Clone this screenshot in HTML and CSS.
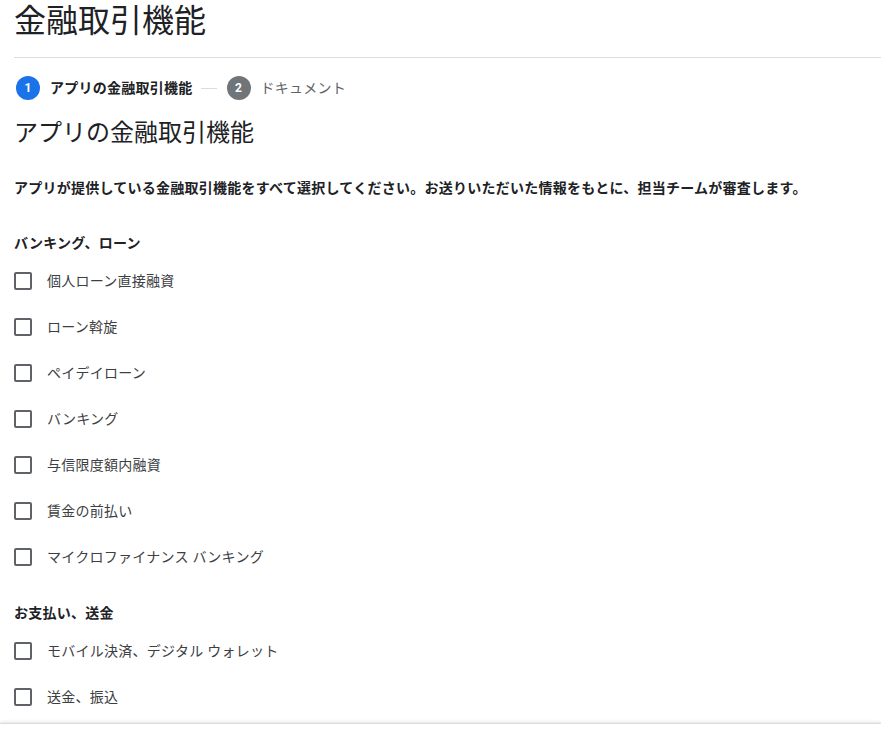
FILE: index.html
```html
<!DOCTYPE html>
<html lang="ja">
<head>
<meta charset="utf-8">
<title>金融取引機能</title>
<link rel="stylesheet" href="styles.css">
</head>
<body>
<div class="page">
  <h1 class="title">金融取引機能</h1>
  <div class="divider"></div>
  <div class="stepper">
    <span class="step-num active">1</span>
    <span class="step-label active">アプリの金融取引機能</span>
    <span class="step-line"></span>
    <span class="step-num">2</span>
    <span class="step-label">ドキュメント</span>
  </div>
  <h2 class="heading">アプリの金融取引機能</h2>
  <p class="intro">アプリが提供している金融取引機能をすべて選択してください。お送りいただいた情報をもとに、担当チームが審査します。</p>

  <div class="group">
    <div class="group-title">バンキング、ローン</div>
    <label class="row"><span class="box"></span><span class="label">個人ローン直接融資</span></label>
    <label class="row"><span class="box"></span><span class="label">ローン斡旋</span></label>
    <label class="row"><span class="box"></span><span class="label">ペイデイローン</span></label>
    <label class="row"><span class="box"></span><span class="label">バンキング</span></label>
    <label class="row"><span class="box"></span><span class="label">与信限度額内融資</span></label>
    <label class="row"><span class="box"></span><span class="label">賃金の前払い</span></label>
    <label class="row"><span class="box"></span><span class="label">マイクロファイナンス バンキング</span></label>
  </div>

  <div class="group second">
    <div class="group-title">お支払い、送金</div>
    <label class="row"><span class="box"></span><span class="label">モバイル決済、デジタル ウォレット</span></label>
    <label class="row"><span class="box"></span><span class="label">送金、振込</span></label>
  </div>
</div>
<div class="footer"></div>
</body>
</html>
```
FILE: styles.css
```css
html, body {
  margin: 0;
  padding: 0;
  background: #ffffff;
}
body {
  font-family: Roboto, "Noto Sans CJK JP", sans-serif;
  color: #202124;
  overflow: hidden;
  height: 740px;
}
.page {
  padding: 1px 0 0 14px;
  display: flex;
  flex-direction: column;
}
.title {
  margin: 0;
  font-size: 32px;
  line-height: 40px;
  font-weight: 400;
  color: #202124;
}
.divider {
  margin-top: 16px;
  height: 1px;
  background: #dadce0;
}
.stepper {
  margin-top: 18px;
  display: flex;
  align-items: center;
  height: 24px;
}
.step-num {
  width: 24px;
  height: 24px;
  border-radius: 50%;
  background: #70757a;
  color: #fff;
  font-size: 12px;
  font-weight: 700;
  display: flex;
  align-items: center;
  justify-content: center;
  margin-left: 2px;
}
.step-num.active {
  background: #1a73e8;
}
.step-label {
  margin-left: 10px;
  font-size: 14px;
  line-height: 20px;
  letter-spacing: 0.25px;
  color: #5f6368;
}
.step-label.active {
  color: #202124;
  font-weight: 700;
}
.step-line {
  width: 16px;
  height: 1px;
  background: #dadce0;
  margin: 0 8px 0 8px;
}
.heading {
  margin: 17px 0 0 0;
  font-size: 24px;
  line-height: 32px;
  font-weight: 400;
  color: #202124;
}
.intro {
  margin: 29px 0 0 0;
  font-size: 14px;
  line-height: 20px;
  font-weight: 700;
  letter-spacing: 0.25px;
  color: #202124;
  white-space: nowrap;
}
.group {
  margin-top: 35px;
  display: flex;
  flex-direction: column;
}
.group.second {
  margin-top: 23px;
}
.group-title {
  font-size: 14px;
  line-height: 20px;
  font-weight: 700;
  letter-spacing: 0.25px;
  color: #202124;
  margin-bottom: 5px;
}
.row {
  height: 46px;
  display: flex;
  align-items: center;
}
.box {
  box-sizing: border-box;
  width: 18px;
  height: 18px;
  border: 2px solid #5f6368;
  border-radius: 2px;
  flex: none;
}
.label {
  margin-left: 15px;
  font-size: 14px;
  line-height: 20px;
  letter-spacing: 0.25px;
  color: #3c4043;
}
.footer {
  position: fixed;
  left: 0;
  right: 0;
  bottom: 0;
  height: 16px;
  background: #fff;
  border-top: 1px solid #dadce0;
  box-shadow: 0 -1px 3px rgba(60, 64, 67, 0.15);
}
```
